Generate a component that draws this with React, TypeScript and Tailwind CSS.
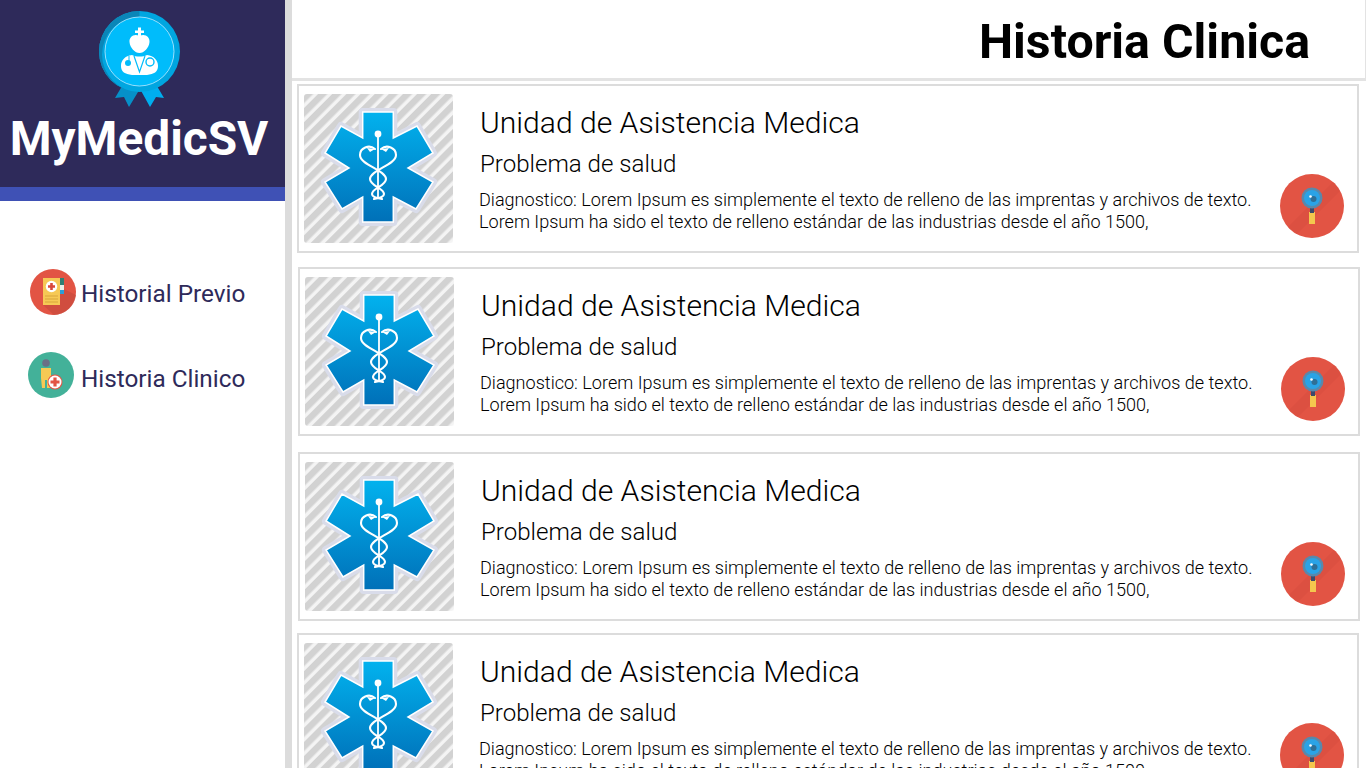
import React from "react";

function StarImage({ id }: { id: string }) {
  const arm = "M-15.3 -56 H15.3 V-30 L39 -42 L55 -15 L30 0 L55 14 L38 41 L15.3 29 V54 H-15.3 V29 L-36 41 L-53 14 L-29 0 L-53 -15 L-37 -42 L-15.3 -30 Z";
  return (
    <svg viewBox="0 0 149 149" className="w-[149px] h-[149px] shrink-0 block">
      <defs>
        <pattern id={`st-${id}`} width="10" height="10" patternUnits="userSpaceOnUse" patternTransform="rotate(45)">
          <rect width="10" height="10" fill="#f4f4f4" />
          <rect width="6.5" height="10" fill="#d2d2d2" />
        </pattern>
        <linearGradient id={`gr-${id}`} x1="0" y1="0" x2="0" y2="1">
          <stop offset="0" stopColor="#02b2ee" />
          <stop offset="1" stopColor="#0070b8" />
        </linearGradient>
      </defs>
      <rect width="149" height="149" rx="3" fill={`url(#st-${id})`} />
      <g transform="translate(74 74)">
        <path d={arm} fill="#e6e9f3" stroke="#d9dcea" strokeWidth="8" strokeLinejoin="round" />
        <path d={arm} fill={`url(#gr-${id})`} stroke="#ffffff" strokeWidth="1.5" />
        <g fill="none" stroke="#ffffff" strokeLinecap="round">
          <path d="M0 -33 V30" strokeWidth="1.8" />
          <path d="M-3 -19 C-9 -24 -18 -20 -18 -13 C-18 -3 8 2 8 11 C8 18 -6 20 -6 26 C-6 28 -3 30 4 31" strokeWidth="2.1" />
          <path d="M3 -19 C9 -24 18 -20 18 -13 C18 -3 -8 2 -8 11 C-8 18 6 20 6 26 C6 28 3 30 -4 31" strokeWidth="2.1" />
        </g>
        <circle cx="0" cy="-34" r="3.4" fill="#ffffff" />
        <path d="M-11 -20 L-3 -19 L-8 -16 Z M11 -20 L3 -19 L8 -16 Z" fill="#ffffff" />
      </g>
    </svg>
  );
}

function SearchBadge() {
  return (
    <svg viewBox="0 0 64 64" className="w-16 h-16 shrink-0 block">
      <circle cx="32" cy="32" r="32" fill="#e25444" />
      <path d="M8 53 L53 8 L60 17 L17 60 Z" fill="#d94f40" opacity="0.6" />
      <rect x="29" y="38" width="6" height="12" fill="#f4c74e" />
      <rect x="30" y="33" width="4" height="6" fill="#3c4a6b" />
      <circle cx="32" cy="24" r="10.5" fill="#5a88aa" />
      <circle cx="32" cy="24" r="8" fill="#2aa3e6" />
      <circle cx="33.5" cy="25" r="3" fill="#2f6f96" />
      <circle cx="30.5" cy="22.5" r="1.3" fill="#ffffff" />
    </svg>
  );
}

function RecordIcon() {
  return (
    <svg viewBox="0 0 46 46" className="w-[46px] h-[46px] shrink-0 block">
      <circle cx="23" cy="23" r="23" fill="#e25444" />
      <path d="M34 20 L46 26 A23 23 0 0 1 24 46 L13 36 Z" fill="#c94a3d" opacity="0.7" />
      <rect x="13" y="9" width="17" height="27" fill="#f6c955" />
      <rect x="30" y="9" width="4" height="7" fill="#2f7f73" />
      <rect x="30" y="16" width="4" height="5" fill="#e8f0e8" />
      <rect x="30" y="21" width="4" height="4" fill="#2a9fd8" />
      <circle cx="21.5" cy="17.5" r="5.7" fill="#ffffff" />
      <path d="M20.2 14 H22.8 V16.2 H25 V18.8 H22.8 V21 H20.2 V18.8 H18 V16.2 H20.2 Z" fill="#d9483b" />
      <path d="M15 27 H28 M15 30 H28 M15 33 H28" stroke="#d9a53c" strokeWidth="1" />
    </svg>
  );
}

function PatientIcon() {
  return (
    <svg viewBox="0 0 46 46" className="w-[46px] h-[46px] shrink-0 block">
      <circle cx="23" cy="23" r="23" fill="#43b199" />
      <circle cx="18" cy="11" r="3.8" fill="#6b6f86" />
      <path d="M13 16 H23 V26 L22 36 H19 V28 H17 V36 H14 L13 26 Z" fill="#f6c955" />
      <circle cx="27" cy="30" r="7.5" fill="#e25444" />
      <circle cx="27" cy="30" r="6.5" fill="#ffffff" />
      <path d="M25.4 25.5 H28.6 V28.4 H31.5 V31.6 H28.6 V34.5 H25.4 V31.6 H22.5 V28.4 H25.4 Z" fill="#e25444" />
    </svg>
  );
}

function Logo() {
  return (
    <svg viewBox="0 0 82 96" className="w-[82px] h-[96px] block ml-[2px]">
      <path d="M26 70 L16 87 L25 86 L30 96 L42 76 Z" fill="#0690c8" />
      <path d="M55 70 L65 87 L57 86 L51 96 L40 76 Z" fill="#00aeef" />
      <circle cx="40.5" cy="40.5" r="40.5" fill="#00a6e0" />
      <path d="M40.5 0 A40.5 40.5 0 0 0 40.5 81 A34.5 34.5 0 0 1 40.5 6 Z" fill="#0a86b8" />
      <circle cx="40.5" cy="40.5" r="34.5" fill="#00bcfb" stroke="#bdeaff" strokeWidth="0.8" />
      <path d="M39 16.5 H42 V19.5 H45 V22 H42 V25 H39 V22 H36 V19.5 H39 Z" fill="#fff" />
      <path d="M40.5 25 C46 22 51 26 50.5 31 C50 37 45 42 40.5 42 C36 42 31 37 30.5 31 C30 26 35 22 40.5 25 Z" fill="#fff" />
      <path d="M33 44 C37 46 44 46 48 44 C55 45 59 49 59 55 C59 61 55 63 48 64 H33 C26 63 22 61 22 55 C22 49 26 45 33 44 Z" fill="#fff" />
      <path d="M35 45 L40.5 61 L46 45" fill="none" stroke="#00bcfb" strokeWidth="1.2" />
      <path d="M30 45 V50" stroke="#00bcfb" strokeWidth="1" />
      <circle cx="29" cy="52" r="3" fill="#00bcfb" />
      <circle cx="51" cy="51" r="4" fill="none" stroke="#00bcfb" strokeWidth="1.4" />
    </svg>
  );
}

function Card({ id, className }: { id: string; className: string }) {
  return (
    <div className={`border-2 border-[#dcdcdc] bg-white h-[169px] shrink-0 flex pt-[8px] pl-[5px] pr-[13px] ${className}`}>
      <StarImage id={id} />
      <div className="ml-[26px] flex-1 min-w-0 relative">
        <h2 className="text-[30.1px] leading-[36px] font-light text-black mt-[11px] pl-[1px]">Unidad de Asistencia Medica</h2>
        <p className="text-[24.1px] leading-[30px] font-light text-black mt-[8px] pl-[1px]">Problema de salud</p>
        <p className="text-[18.07px] leading-[22px] font-light text-black mt-[10px] whitespace-nowrap">
          Diagnostico: Lorem Ipsum es simplemente el texto de relleno de las imprentas y archivos de texto.
          <br />
          Lorem Ipsum ha sido el texto de relleno estándar de las industrias desde el año 1500,
        </p>
        <div className="absolute right-0 top-[80px]">
          <SearchBadge />
        </div>
      </div>
    </div>
  );
}

export default function App() {
  return (
    <div className="h-[768px] w-[1366px] overflow-hidden flex bg-white font-['Roboto',sans-serif]">
      <aside className="w-[285px] shrink-0">
        <div className="h-[187px] bg-[#2e2a5a] flex flex-col items-center pt-[11px] pr-[7px]">
          <Logo />
          <div className="text-[47.8px] leading-[56px] font-bold text-white mt-[4px] whitespace-nowrap">MyMedicSV</div>
        </div>
        <div className="h-[14px] bg-[#3f51b5]" />
        <nav className="text-[#2e2a5a] text-[24.3px] leading-[30px]">
          <div className="flex items-center gap-[5px] pl-[30px] mt-[68px]">
            <RecordIcon />
            <span className="pt-[4px]">Historial Previo</span>
          </div>
          <div className="flex items-center gap-[7px] pl-[28px] mt-[37px]">
            <PatientIcon />
            <span className="pt-[8px]">Historia Clinico</span>
          </div>
        </nav>
      </aside>
      <div className="w-[7px] shrink-0 bg-[#dcdcdc]" />
      <main className="flex-1 min-w-0 flex flex-col">
        <header className="h-[81px] shrink-0 border-b-[3px] border-r border-[#e3e3e3] flex items-center justify-end pr-[55px] pt-[6px]">
          <h1 className="text-[48.3px] leading-[56px] font-bold text-black whitespace-nowrap">Historia Clinica</h1>
        </header>
        <Card id="a" className="mt-[3px] ml-[5px] mr-[7px]" />
        <Card id="b" className="mt-[14px] ml-[6px] mr-[6px]" />
        <Card id="c" className="mt-[16px] ml-[6px] mr-[6px]" />
        <Card id="d" className="mt-[12px] ml-[5px] mr-[7px]" />
      </main>
    </div>
  );
}
